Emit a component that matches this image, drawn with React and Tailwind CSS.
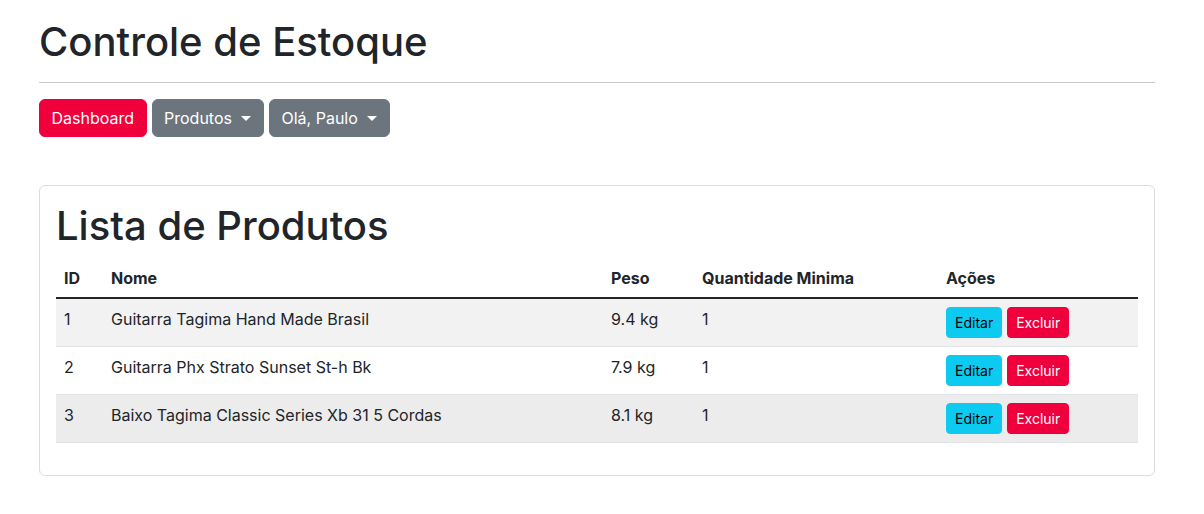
const produtos = [
  { id: 1, nome: 'Guitarra Tagima Hand Made Brasil', peso: '9.4 kg', qtd: 1 },
  { id: 2, nome: 'Guitarra Phx Strato Sunset St-h Bk', peso: '7.9 kg', qtd: 1 },
  { id: 3, nome: 'Baixo Tagima Classic Series Xb 31 5 Cordas', peso: '8.1 kg', qtd: 1 },
]

const rowBg = ['bg-[#f2f2f2]', 'bg-white', 'bg-[#ececec]']

function Caret() {
  return (
    <span className="ml-[9.5px] inline-block h-0 w-0 border-x-[5px] border-t-[5px] border-x-transparent border-t-white align-[3px]" />
  )
}

export default function App() {
  return (
    <div className="min-h-[514px] bg-white font-['Inter',sans-serif] text-base leading-6 text-[#212529]">
      <div className="ml-[39px] w-[1116px] pt-[18px]">
        <h1 className="text-[40px] font-medium leading-[48px]">Controle de Estoque</h1>
        <hr className="mt-4 mb-4 border-t border-[#c8c9ca]" />

        <div className="flex gap-[5px]">
          <button className="h-[38px] rounded-md border border-[#ef003c] bg-[#ef003c] px-[11.5px] text-white">Dashboard</button>
          <button className="h-[38px] rounded-md border border-[#6c757d] bg-[#6c757d] px-[11.5px] text-white">
            Produtos
            <Caret />
          </button>
          <button className="h-[38px] rounded-md border border-[#6c757d] bg-[#6c757d] px-[11.5px] text-white">
            Olá, Paulo
            <Caret />
          </button>
        </div>

        <div className="mt-12 rounded-md border border-[#dcdcdc] p-4">
          <h1 className="mb-2 text-[40px] font-medium leading-[48px]">Lista de Produtos</h1>
          <table className="mb-4 w-full border-collapse text-left align-top">
            <thead>
              <tr className="border-b-2 border-[#212529]">
                <th className="w-[47px] px-2 pt-2 pb-[7px] font-bold">ID</th>
                <th className="w-[500px] px-2 pt-2 pb-[7px] font-bold">Nome</th>
                <th className="w-[91px] px-2 pt-2 pb-[7px] font-bold">Peso</th>
                <th className="w-[244px] px-2 pt-2 pb-[7px] font-bold">Quantidade Minima</th>
                <th className="px-2 pt-2 pb-[7px] font-bold">Ações</th>
              </tr>
            </thead>
            <tbody>
              {produtos.map((p, i) => (
                <tr key={p.id} className={`border-b border-[#dee2e6] ${rowBg[i]}`}>
                  <td className="px-2 py-2 align-top">{p.id}</td>
                  <td className="px-2 py-2 align-top">{p.nome}</td>
                  <td className="px-2 py-2 align-top">{p.peso}</td>
                  <td className="px-2 py-2 align-top">{p.qtd}</td>
                  <td className="px-2 py-2 align-top">
                    <div className="flex gap-[5px]">
                      <button className="h-[31px] rounded-[4px] border border-[#0dcaf0] bg-[#0dcaf0] px-2 text-sm text-black">Editar</button>
                      <button className="h-[31px] rounded-[4px] border border-[#ef003c] bg-[#ef003c] px-2 text-sm text-white">Excluir</button>
                    </div>
                  </td>
                </tr>
              ))}
            </tbody>
          </table>
        </div>
      </div>
    </div>
  )
}
